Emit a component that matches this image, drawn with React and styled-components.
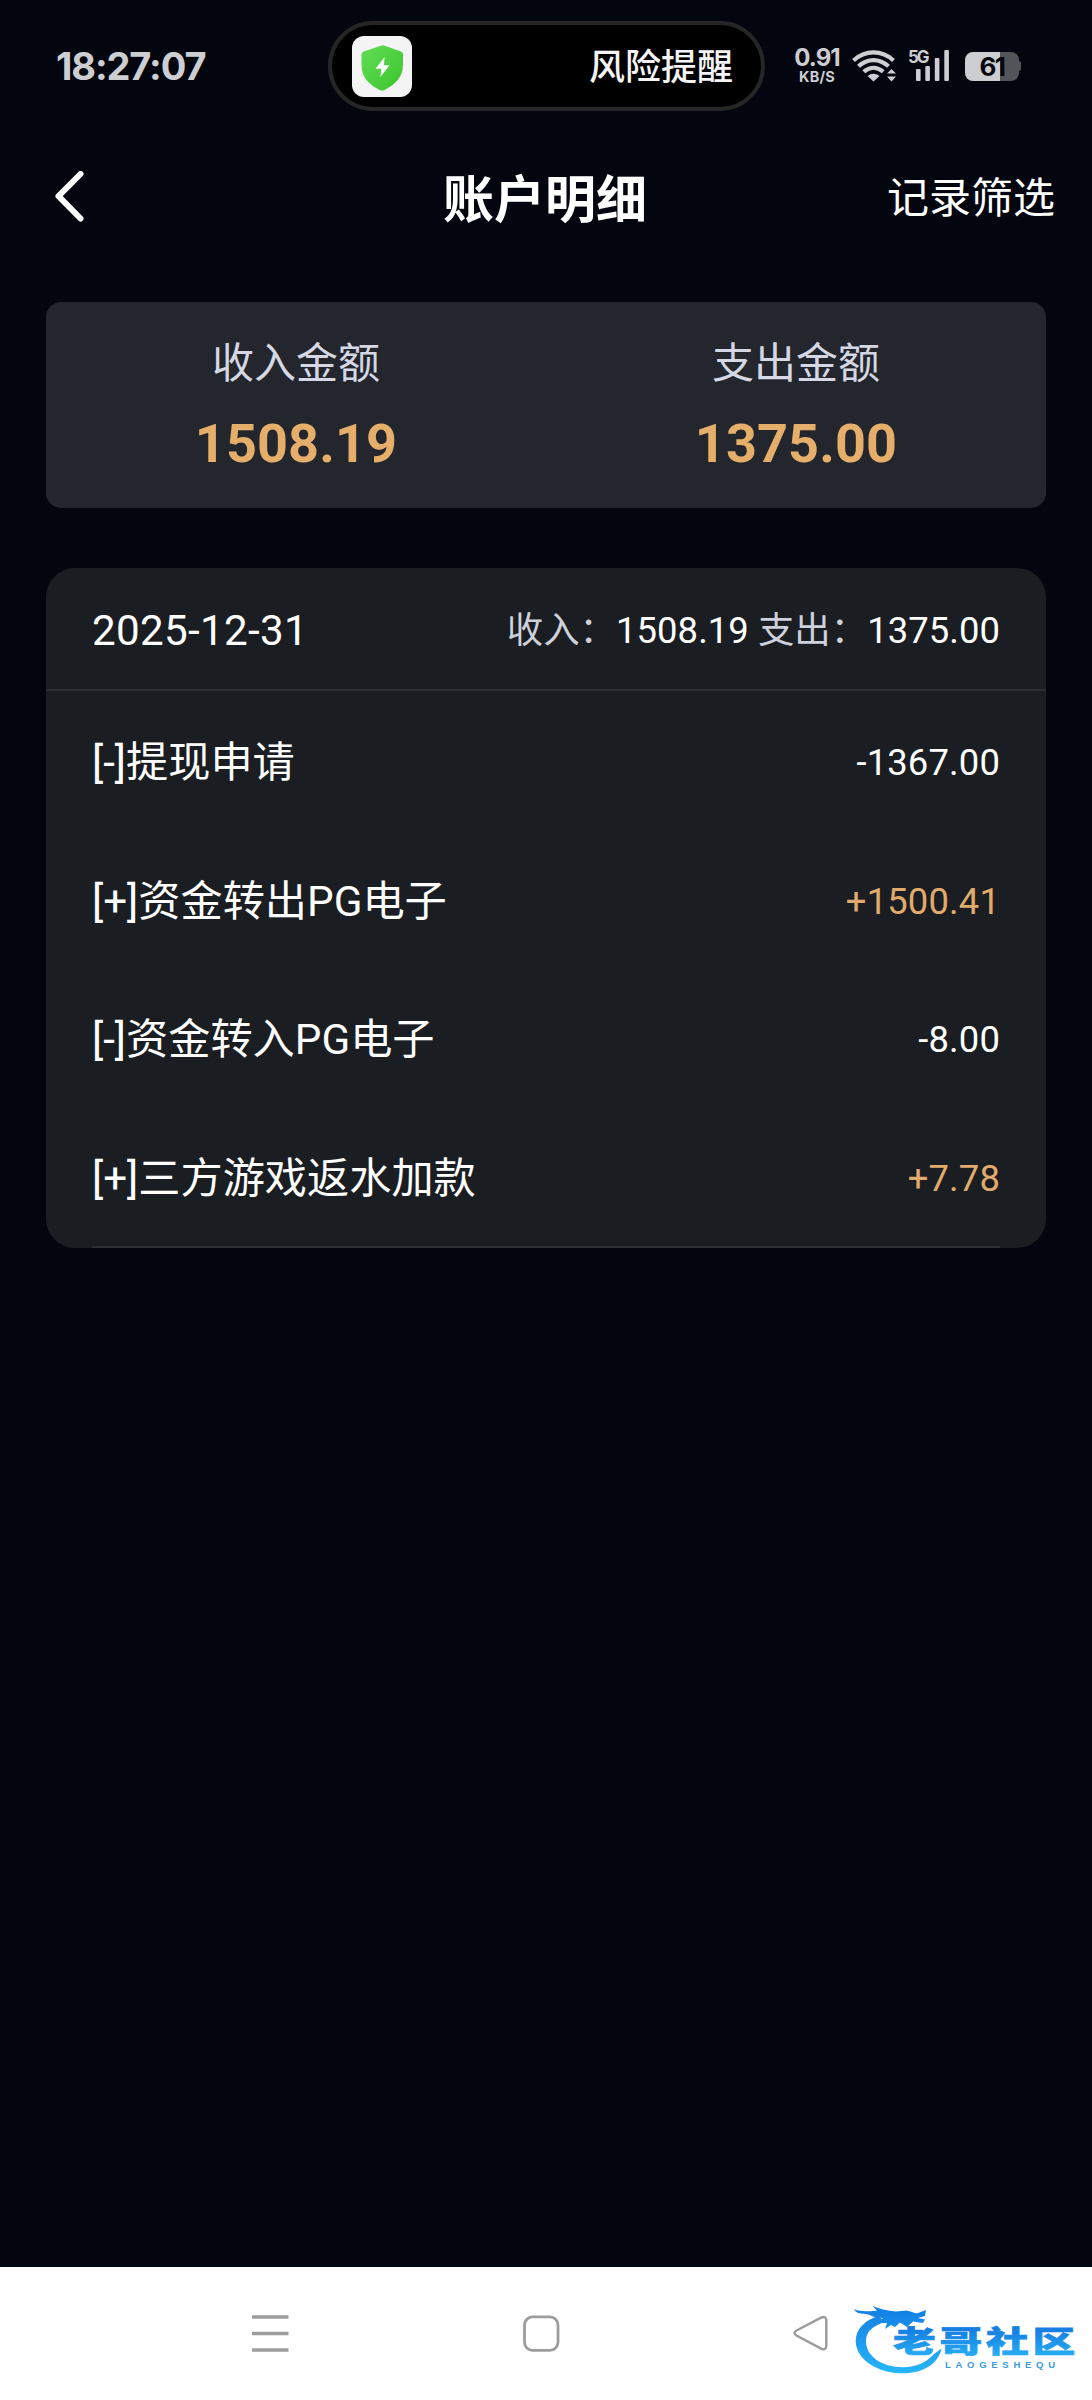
import React from "react";
import styled, { createGlobalStyle } from "styled-components";

const GlobalStyle = createGlobalStyle`
  * {
    box-sizing: border-box;
    margin: 0;
    padding: 0;
  }

  body {
    background-color: #03060e;
    font-family: Roboto, "Noto Sans CJK SC", sans-serif;
    color: #fff;
  }
`;

const Page = styled.div`
  width: 1092px;
  height: 2400px;
  display: flex;
  flex-direction: column;
  overflow: hidden;
`;

const StatusBar = styled.div`
  height: 132px;
  padding: 21px 70px 0 56px;
  display: flex;
  align-items: flex-start;
  color: #cdced2;
`;

const Clock = styled.span`
  width: 272px;
  font-family: Inter, sans-serif;
  font-size: 38px;
  font-weight: 650;
  line-height: 90px;
  letter-spacing: -1.1px;
`;

const Island = styled.div`
  width: 437px;
  height: 90px;
  padding: 0 28px 0 20px;
  display: flex;
  align-items: center;
  justify-content: space-between;
  background-color: #000;
  border: 4px solid #262626;
  border-radius: 45px;
`;

const IslandText = styled.span`
  padding-top: 4px;
  font-size: 36px;
  font-weight: 500;
  line-height: 78px;
  color: #f4f4f6;
`;

const StatusIcons = styled.div`
  height: 90px;
  margin-left: 28px;
  display: flex;
  align-items: center;
`;

const NetSpeed = styled.div`
  width: 48px;
  display: flex;
  flex-direction: column;
  align-items: center;
  font-family: Inter, sans-serif;

  strong {
    font-size: 24px;
    line-height: 20px;
    font-weight: 700;
    letter-spacing: -0.9px;
  }

  span {
    font-size: 14.5px;
    line-height: 17px;
    letter-spacing: 0.2px;
    font-weight: 700;
  }
`;

const Battery = styled.div`
  width: 54px;
  height: 29px;
  margin-left: 15px;
  border-radius: 8px;
  background: linear-gradient(to right, #cdced2 35px, #515459 35px);
  color: #05070d;
  font-family: Inter, sans-serif;
  font-size: 26px;
  font-weight: 700;
  line-height: 30px;
  letter-spacing: -1.5px;
  text-align: center;
`;

const BatteryTip = styled.div`
  width: 2px;
  height: 10px;
  border-radius: 0 2px 2px 0;
  background-color: #515459;
`;

const NavBar = styled.header`
  height: 130px;
  padding: 0 37px 0 54px;
  display: grid;
  grid-template-columns: 389px 1fr 389px;
  align-items: center;
`;

const Title = styled.h1`
  padding-top: 7px;
  font-size: 51px;
  font-weight: 700;
  line-height: 70px;
  white-space: nowrap;
`;

const FilterLink = styled.span`
  justify-self: end;
  padding-top: 4px;
  font-size: 42px;
  line-height: 60px;
`;

const Summary = styled.section`
  height: 206px;
  margin: 40px 46px 0;
  display: grid;
  grid-template-columns: 1fr 1fr;
  background-color: #23262d;
  border-radius: 15px;
`;

const SummaryItem = styled.div`
  padding-top: 32px;
  display: flex;
  flex-direction: column;
  align-items: center;

  span {
    font-size: 42px;
    line-height: 60px;
    color: #d5d8e4;
  }

  strong {
    margin-top: 19px;
    font-size: 54px;
    line-height: 62px;
    font-weight: 700;
    letter-spacing: 0.1px;
    color: #e6ae6b;
  }
`;

const Card = styled.section`
  height: 680px;
  margin: 60px 46px 0;
  background-color: #1a1d21;
  border-radius: 29px;
`;

const CardHeader = styled.div`
  height: 123px;
  padding: 4px 46px 0;
  display: flex;
  align-items: center;
  justify-content: space-between;
  border-bottom: 2px solid #2c2f33;
`;

const CardDate = styled.span`
  font-size: 42.2px;
  line-height: 60px;
  letter-spacing: 0.3px;
`;

const DayTotal = styled.span`
  font-size: 36.4px;
  line-height: 60px;
  letter-spacing: 0.06px;
  white-space: pre;

  em {
    font-style: normal;
    color: #cdd1dc;
  }
`;

const Records = styled.ul`
  margin: 0 46px;
  list-style: none;
  border-bottom: 2px solid #2c2f33;
`;

const Record = styled.li`
  height: 138.8px;
  padding-top: 5px;
  display: flex;
  align-items: center;
  justify-content: space-between;
`;

const RecordName = styled.span`
  font-size: 42.2px;
  line-height: 60px;
`;

const RecordAmount = styled.span`
  font-size: 36.4px;
  line-height: 60px;
  letter-spacing: 0.15px;
  color: ${({ $income }) => ($income ? "#e0ab6c" : "#fff")};
`;

const SystemNav = styled.nav`
  position: relative;
  height: 133px;
  margin-top: auto;
  padding-left: 252px;
  display: flex;
  align-items: center;
  background-color: #fff;

  > svg:nth-child(2) {
    margin-left: 234px;
  }

  > svg:nth-child(3) {
    margin-left: 233px;
  }
`;

const Watermark = styled.svg`
  position: absolute;
  left: 850px;
  top: 29px;
`;

const ShieldIcon = () => (
  <svg width="60" height="61" viewBox="0 0 60 61">
    <defs>
      <linearGradient id="shield" x1="0" y1="0" x2="1" y2="1">
        <stop offset="0" stopColor="#62dd57" />
        <stop offset="1" stopColor="#3cc42c" />
      </linearGradient>
    </defs>
    <rect width="60" height="61" rx="12" fill="#f4f4f4" />
    <path
      d="M30 9.500 Q31 9 32 9.500 L49 15.500 Q51 16.300 51 18.500 V29 C51 41 43 49 32 54.200 Q30 55 28 54.200 C17 49 9.500 41 9.500 29 V18.500 Q9.500 16.300 11.500 15.500 Z"
      fill="url(#shield)"
    />
    <path d="M32.500 21 L23.500 32.800 H29.200 L28.500 41 L37.500 29.200 H32 Z" fill="#fff" />
  </svg>
);

const WifiIcon = () => (
  <svg width="45" height="34" viewBox="0 0 45 34" fill="none" style={{ marginLeft: 11 }}>
    <g stroke="#cdced2" strokeWidth="4.200" strokeLinecap="butt">
      <path d="M1.500 11.500 C13 0.700 30 0.700 41.500 11.500" />
      <path d="M6.500 17.300 C15.500 9 27.500 9 36.500 17.300" />
      <path d="M11.800 22.800 C17.800 17.400 25.200 17.400 31.200 22.800" />
    </g>
    <path d="M15.500 27 Q21.500 22.500 27.500 27 L21.500 32.500 Z" fill="#cdced2" />
    <path d="M35 24.500 L39.500 20 L44 24.500 Z M35 27.500 L39.500 32.500 L44 27.500 Z" fill="#cdced2" />
  </svg>
);

const SignalIcon = () => (
  <svg width="44" height="46" viewBox="-2 -6 44 46" fill="#cdced2" style={{ marginLeft: 9 }}>
    <text x="0" y="14" fontFamily="Inter" fontSize="17" fontWeight="700" letterSpacing="-2.200">
      5G
    </text>
    <rect x="8" y="20" width="4.600" height="12" rx="1" />
    <rect x="17.300" y="17" width="4.600" height="15" rx="1" />
    <rect x="26.800" y="9" width="4.600" height="23" rx="1" />
    <rect x="36.300" y="1" width="4.600" height="31" rx="1" />
  </svg>
);

const BackIcon = () => (
  <svg width="32" height="52" viewBox="0 0 32 52" fill="none">
    <path
      d="M26.500 3 L4.500 25.200 L26.500 47.500"
      stroke="#fff"
      strokeWidth="6"
      strokeLinecap="round"
      strokeLinejoin="round"
    />
  </svg>
);

const records = [
  { name: "[-]提现申请", amount: "-1367.00" },
  { name: "[+]资金转出PG电子", amount: "+1500.41", income: true },
  { name: "[-]资金转入PG电子", amount: "-8.00" },
  { name: "[+]三方游戏返水加款", amount: "+7.78", income: true },
];

const App = () => {
  return (
    <Page>
      <GlobalStyle />

      <StatusBar>
        <Clock>18:27:07</Clock>
        <Island>
          <ShieldIcon />
          <IslandText>风险提醒</IslandText>
        </Island>
        <StatusIcons>
          <NetSpeed>
            <strong>0.91</strong>
            <span>KB/S</span>
          </NetSpeed>
          <WifiIcon />
          <SignalIcon />
          <Battery>61</Battery>
          <BatteryTip />
        </StatusIcons>
      </StatusBar>

      <NavBar>
        <BackIcon />
        <Title>账户明细</Title>
        <FilterLink>记录筛选</FilterLink>
      </NavBar>

      <Summary>
        <SummaryItem>
          <span>收入金额</span>
          <strong>1508.19</strong>
        </SummaryItem>
        <SummaryItem>
          <span>支出金额</span>
          <strong>1375.00</strong>
        </SummaryItem>
      </Summary>

      <Card>
        <CardHeader>
          <CardDate>2025-12-31</CardDate>
          <DayTotal>
            <em>收入：</em>1508.19 <em>支出：</em>1375.00
          </DayTotal>
        </CardHeader>
        <Records>
          {records.map((record) => (
            <Record key={record.name}>
              <RecordName>{record.name}</RecordName>
              <RecordAmount $income={record.income}>{record.amount}</RecordAmount>
            </Record>
          ))}
        </Records>
      </Card>

      <SystemNav>
        <svg width="37" height="37" viewBox="0 0 37 37" stroke="#9d9d9d" strokeWidth="3.300">
          <path d="M0 2 H36.500 M0 18.500 H36.500 M0 35 H36.500" />
        </svg>
        <svg width="37" height="37" viewBox="0 0 37 37" fill="none">
          <rect x="1.500" y="1.800" width="33.500" height="33.500" rx="8" stroke="#9d9d9d" strokeWidth="2.800" />
        </svg>
        <svg width="37" height="37" viewBox="0 0 37 37" fill="none">
          <path
            d="M3.500 15.500 L28.500 2.500 Q33 0.800 33.300 5 V31 Q33 35.500 28.500 33.800 L3.500 20.500 Q-0.500 18 3.500 15.500 Z"
            stroke="#9d9d9d"
            strokeWidth="2.500"
          />
        </svg>
        <Watermark width="235" height="90" viewBox="0 0 235 90">
          <defs>
            <linearGradient id="logo" gradientUnits="userSpaceOnUse" x1="0" y1="18" x2="0" y2="76">
              <stop offset="0" stopColor="#1583e6" />
              <stop offset="1" stopColor="#27b5f7" />
            </linearGradient>
            <linearGradient id="logoText" x1="0" y1="0" x2="0" y2="1">
              <stop offset="0.300" stopColor="#1680e2" />
              <stop offset="0.900" stopColor="#27aef5" />
            </linearGradient>
          </defs>
          <g fill="url(#logo)">
            <path d="M29 20 C14 24 5.700 34 5.700 45 C6 64 28 77.300 53 77.300 C74 77 88 68 91.700 52.500 L84 58 C77 66 66 71.300 53 71.300 C31 71 16 60 16 45 C16 36 22 30 35 26 Z" />
            <path d="M4 13.300 C10 15.500 15 15.500 23 15 L27 14.500 L22.700 10 C30 13 38 15 46 15.500 L56 14.500 C60 14.500 64 18 68 17 L76 14 L75 20 L68 22 L75 23.500 L73 27 L63 25.500 L57 31 L50 26.500 L45 31 L41 29 L35 33 L37 27 L29 27 L33 22 L24 21 C19 18 15 17.500 11 17.500 C7 17 5 15.500 4 13.300 Z" />
          </g>
          <text
            transform="translate(43 56.300) scale(1.450 1)"
            fontFamily="Noto Sans CJK SC"
            fontSize="29.500"
            fontWeight="900"
            letterSpacing="2.600"
            fill="url(#logoText)"
            stroke="url(#logoText)"
            strokeWidth="0.700"
          >
            老哥社区
          </text>
          <text
            x="95"
            y="71.500"
            fontFamily="Liberation Sans"
            fontSize="9.500"
            fontWeight="700"
            textLength="110"
            fill="#3b9be2"
          >
            LAOGESHEQU
          </text>
        </Watermark>
      </SystemNav>
    </Page>
  );
};

export default App;
